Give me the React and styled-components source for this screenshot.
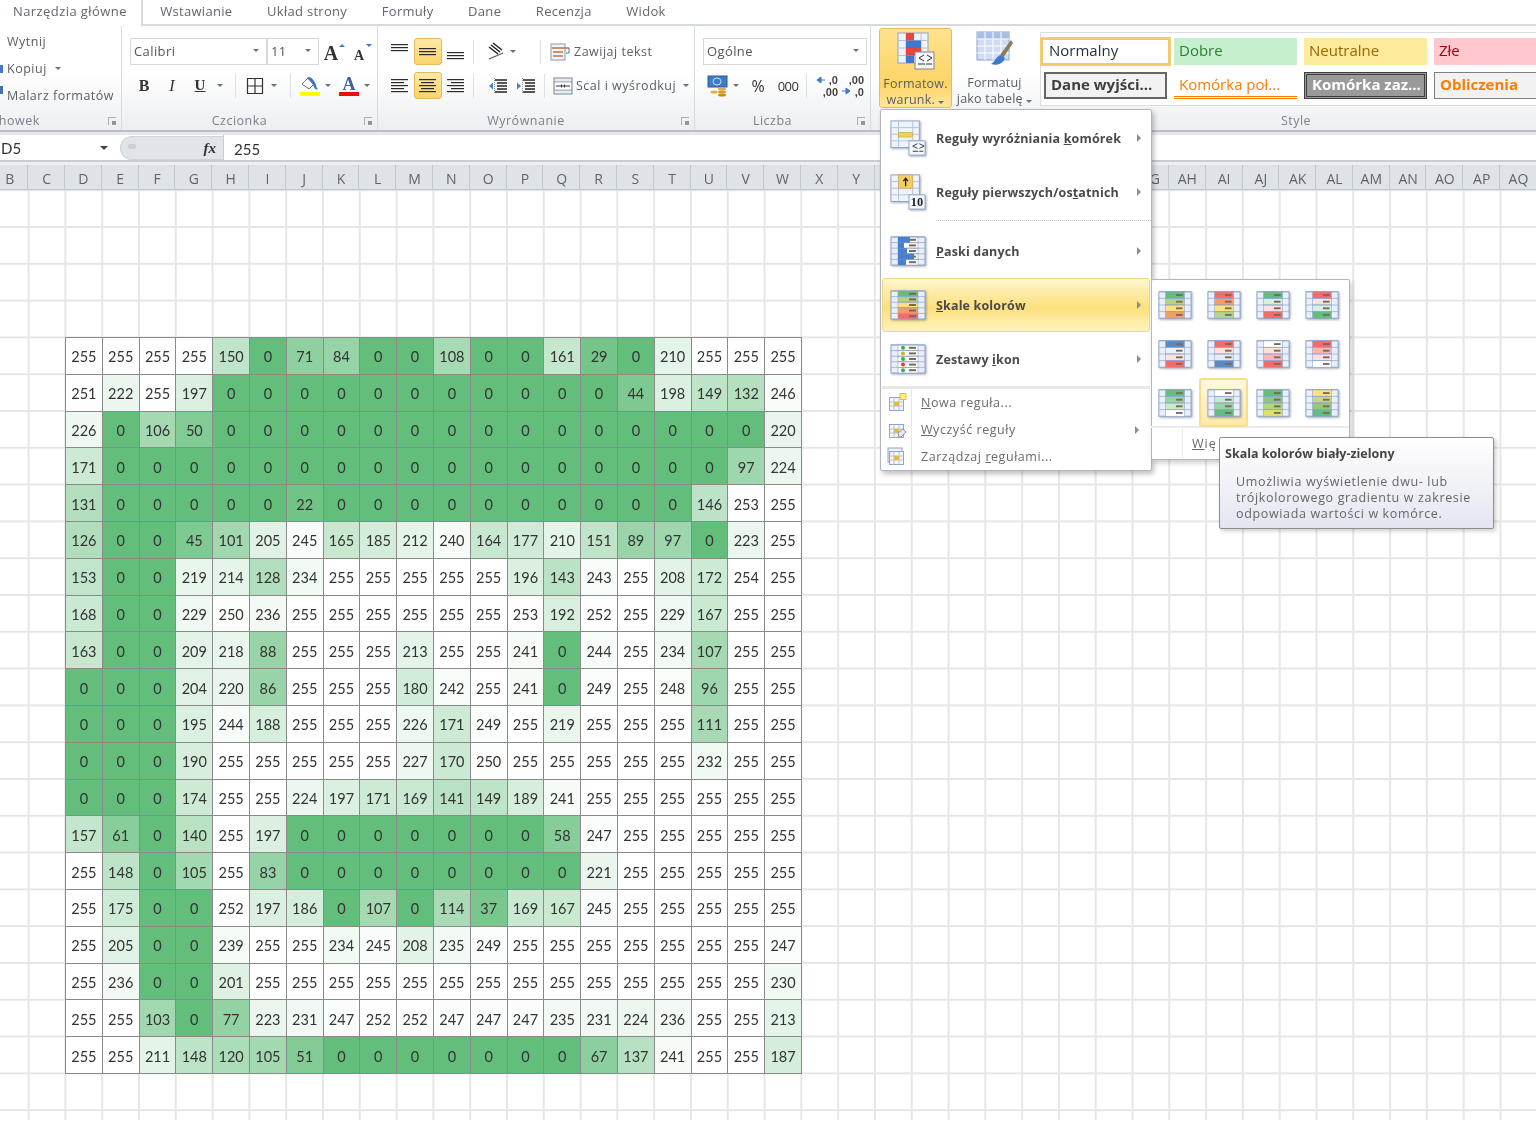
import React from 'react'
import styled, { createGlobalStyle } from 'styled-components'

const GlobalStyle = createGlobalStyle`
  html, body { margin: 0; padding: 0; background: #fff; }
  * { box-sizing: border-box; }
`

const uiFont = `"Open Sans", "Noto Sans", sans-serif`
const cellFont = `Lato, "Open Sans", sans-serif`

const rows = [
  [255,255,255,255,150,0,71,84,0,0,108,0,0,161,29,0,210,255,255,255],
  [251,222,255,197,0,0,0,0,0,0,0,0,0,0,0,44,198,149,132,246],
  [226,0,106,50,0,0,0,0,0,0,0,0,0,0,0,0,0,0,0,220],
  [171,0,0,0,0,0,0,0,0,0,0,0,0,0,0,0,0,0,97,224],
  [131,0,0,0,0,0,22,0,0,0,0,0,0,0,0,0,0,146,253,255],
  [126,0,0,45,101,205,245,165,185,212,240,164,177,210,151,89,97,0,223,255],
  [153,0,0,219,214,128,234,255,255,255,255,255,196,143,243,255,208,172,254,255],
  [168,0,0,229,250,236,255,255,255,255,255,255,253,192,252,255,229,167,255,255],
  [163,0,0,209,218,88,255,255,255,213,255,255,241,0,244,255,234,107,255,255],
  [0,0,0,204,220,86,255,255,255,180,242,255,241,0,249,255,248,96,255,255],
  [0,0,0,195,244,188,255,255,255,226,171,249,255,219,255,255,255,111,255,255],
  [0,0,0,190,255,255,255,255,255,227,170,250,255,255,255,255,255,232,255,255],
  [0,0,0,174,255,255,224,197,171,169,141,149,189,241,255,255,255,255,255,255],
  [157,61,0,140,255,197,0,0,0,0,0,0,0,58,247,255,255,255,255,255],
  [255,148,0,105,255,83,0,0,0,0,0,0,0,0,221,255,255,255,255,255],
  [255,175,0,0,252,197,186,0,107,0,114,37,169,167,245,255,255,255,255,255],
  [255,205,0,0,239,255,255,234,245,208,235,249,255,255,255,255,255,255,255,247],
  [255,236,0,0,201,255,255,255,255,255,255,255,255,255,255,255,255,255,255,230],
  [255,255,103,0,77,223,231,247,252,252,247,247,247,235,231,224,236,255,255,213],
  [255,255,211,148,120,105,51,0,0,0,0,0,0,0,67,137,241,255,255,187],
]

const columns = 'B C D E F G H I J K L M N O P Q R S T U V W X Y Z AA AB AC AD AE AF AG AH AI AJ AK AL AM AN AO AP AQ'.split(' ')
const tabs = ['Wstawianie', 'Układ strony', 'Formuły', 'Dane', 'Recenzja', 'Widok']

// white -> green scale, same as the excel rule
const shade = (v) => {
  const t = v / 255
  const mix = (a) => Math.round(a + (255 - a) * t)
  return `rgb(${mix(99)},${mix(190)},${mix(123)})`
}

const G = '#63be7b', Y = '#ffe084', R = '#f8696b', B = '#5a8ac6', W = '#ffffff', O = '#fb9a5f', L = '#b1d580'
const scales = [
  [G, L, Y, O], [R, O, Y, L], [G, '#d8f0de', '#fde0e0', R], [R, '#fde0e0', '#d8f0de', G],
  [B, '#eef3fb', '#fde0e0', R], [R, '#fde0e0', '#e3ecf8', B], [W, '#fde0e0', '#fbb5b5', R], [R, '#fbb5b5', '#fde0e0', W],
  [G, '#98d4a8', '#cbe9d3', W], [W, '#cbe9d3', '#98d4a8', G], [G, '#8cc97e', L, '#e0e070'], [Y, '#c8d87d', '#94c97f', G],
]

const Page = styled.div`
  position: relative;
  width: 1536px;
  height: 1121px;
  overflow: hidden;
  background: #fff;
  font-family: ${uiFont};
  color: #444;
  filter: blur(0.55px);
`

/* tabs */
const TabBar = styled.div`
  display: flex;
  height: 26px;
  border-bottom: 2px solid #d6dade;
  font-size: 13px;
  color: #5f6770;
`
const Tab = styled.div`
  height: ${(p) => (p.$active ? '26px' : '24px')};
  line-height: 22px;
  letter-spacing: ${(p) => (p.$active ? 0.42 : 0.3)}px;
  padding: 0 ${(p) => (p.$active ? '14px' : '17.3px')} 0 ${(p) => (p.$active ? '13px' : '17.3px')};
  ${(p) => p.$active && 'background: #fff; border-right: 2px solid #d6dade; position: relative;'}
`

/* ribbon */
const Ribbon = styled.div`
  display: flex;
  height: 104px;
  background: linear-gradient(#fff 0%, #fff 45%, #eceef1 100%);
`
const Group = styled.div`
  flex: none;
  width: ${(p) => p.$w}px;
  display: flex;
  flex-direction: column;
  margin-right: 2px;
  border-right: ${(p) => (p.$last ? 'none' : '1px solid #d8dbdf')};
`
const GroupBody = styled.div`
  flex: 1;
  display: flex;
  flex-direction: ${(p) => (p.$row ? 'row' : 'column')};
  gap: ${(p) => (p.$row ? 2 : p.$tight ? 0 : 7)}px;
  padding: ${(p) => (p.$row ? '2px 0 0 6px' : '12px 0 0 6px')};
  min-height: 0;
`
const GroupFoot = styled.div`
  height: 20px;
  position: relative;
  flex: none;
  text-align: center;
  font-size: 12.5px;
  line-height: 21px;
  color: #7a828b;
  letter-spacing: 0.5px;
  padding-right: ${(p) => (p.$center ? 0 : 22)}px;
`
const ClippedLabel = styled.span`
  display: block;
  text-align: left;
  margin-left: -15px;
`
const Launcher = styled.span`
  position: absolute;
  right: 5px;
  top: 7px;
  width: 8px;
  height: 8px;
  border-left: 1px solid #a9afb6;
  border-top: 1px solid #a9afb6;
  &::after {
    content: '';
    position: absolute;
    right: 0;
    bottom: 0;
    width: 4px;
    height: 4px;
    background: #8f969e;
  }
`
const ToolRow = styled.div`
  display: flex;
  align-items: center;
  height: 27px;
  flex: none;
`
const ClipRow = styled.div`
  position: relative;
  display: flex;
  align-items: center;
  gap: 8px;
  height: 27px;
  margin: ${(p) => (p.$first ? '-10px' : '0')} 0 0 1px;
  font-size: 12.5px;
  color: #5a6068;
  letter-spacing: 0.5px;
  flex: none;
  ${(p) =>
    p.$mark &&
    `&::before {
      content: '';
      position: absolute;
      left: -7px;
      top: ${p.$top}px;
      width: 3px;
      height: 8px;
      background: ${p.$mark};
    }`}
`
const Select = styled.div`
  width: ${(p) => p.$w}px;
  height: 27px;
  background: #fff;
  border: 1px solid #d5d9dd;
  margin-right: ${(p) => p.$gap || 0}px;
  display: flex;
  align-items: center;
  justify-content: space-between;
  padding: 0 7px 2px 3px;
  font-size: 13px;
  letter-spacing: 0.4px;
  color: #555;
  flex: none;
`
const Caret = styled.i`
  display: inline-block;
  flex: none;
  width: 0;
  height: 0;
  border-left: 3px solid transparent;
  border-right: 3px solid transparent;
  border-top: 3px solid #6c7076;
  margin: ${(p) => p.$m || '0'};
`
const Tool = styled.div`
  flex: none;
  width: ${(p) => p.$w || 28}px;
  height: 27px;
  margin-left: ${(p) => p.$left || 0}px;
  display: flex;
  align-items: center;
  justify-content: center;
  color: #333;
  font-size: ${(p) => p.$size || 15}px;
  letter-spacing: ${(p) => p.$track || 0}px;
  font-family: ${(p) => (p.$serif ? '"Liberation Serif", serif' : uiFont)};
  font-weight: ${(p) => (p.$bold ? 700 : 400)};
  font-style: ${(p) => (p.$italic ? 'italic' : 'normal')};
  ${(p) =>
    p.$on &&
    'background: linear-gradient(#ffe9a8, #fdd36a); border: 1px solid #e5b95c; border-radius: 3px;'}
`
const VLine = styled.span`
  flex: none;
  width: 1px;
  height: 24px;
  background: #dfe2e5;
  margin: 0 ${(p) => p.$m || 8}px;
`
const TextTool = styled.div`
  display: flex;
  align-items: center;
  gap: ${(p) => p.$gap || 4}px;
  margin-left: ${(p) => p.$left || 0}px;
  font-size: 12.5px;
  letter-spacing: 0.5px;
  color: #5a6068;
  white-space: nowrap;
`
const BigButton = styled.div`
  flex: none;
  width: ${(p) => p.$w}px;
  height: 80px;
  display: flex;
  flex-direction: column;
  align-items: center;
  padding-top: 3px;
  font-size: 12.5px;
  line-height: 16px;
  letter-spacing: 0.2px;
  color: #5a5f66;
  text-align: center;
  white-space: nowrap;
  border-radius: 3px;
  ${(p) =>
    p.$on &&
    'background: linear-gradient(#ffe38d, #fdd466 70%, #ffe79a); border: 1px solid #e6bb5b;'}
  svg { margin-bottom: 6px; flex: none; }
`
const Gallery = styled.div`
  flex: none;
  width: 560px;
  height: 74px;
  margin: 4px 0 0 3px;
  padding: 5px 0 0 3px;
  background: #fff;
  border: 1px solid #d9dde1;
  display: grid;
  grid-template-columns: repeat(4, 123px);
  grid-auto-rows: 27px;
  gap: 7px;
  font-family: ${uiFont};
`
const Style = styled.div`
  display: flex;
  align-items: center;
  padding: 0 5px 4px;
  font-size: 15px;
  white-space: nowrap;
  overflow: hidden;
  color: ${(p) => p.$c};
  background: ${(p) => p.$bg || 'transparent'};
  font-weight: ${(p) => (p.$bold ? 700 : 400)};
  border: ${(p) => p.$border || 'none'};
  border-bottom: ${(p) => p.$under || p.$border || 'none'};
  ${(p) => p.$under && 'padding-bottom: 1px;'}
  ${(p) => p.$wide && 'width: 129px; margin-left: -3px; padding-left: 6px; box-shadow: 0 0 0 1px #f3cf78;'}
`

/* formula bar */
const RibbonEdge = styled.div`
  height: 5px;
  border-top: 2px solid #b9bfc5;
  background: #e6e8eb;
`
const FormulaBar = styled.div`
  display: flex;
  height: 27px;
  font-family: ${cellFont};
  font-size: 15px;
  color: #333;
  background: #fff;
  border-bottom: 2px solid #c8ccd1;
`
const NameBox = styled.div`
  width: 116px;
  display: flex;
  align-items: center;
  justify-content: space-between;
  padding: 1px 8px 0 1px;
  flex: none;
  ${Caret} { border-width: 4px 4px 0; border-top-color: #444; }
`
const FxPill = styled.div`
  position: relative;
  width: 103px;
  flex: none;
  margin: 1px 0 0 4px;
  padding-right: 7px;
  background: #e1e4e8;
  border-radius: 14px 0 0 14px;
  border: 1px solid #cfd3d8;
  border-right: none;
  display: flex;
  align-items: center;
  justify-content: flex-end;
  font: italic 700 15px "Liberation Serif", serif;
  &::before {
    content: '';
    position: absolute;
    left: 7px;
    top: 7px;
    width: 8px;
    height: 5px;
    border-radius: 4px;
    background: #c9ced4;
  }
`
const FormulaInput = styled.div`
  flex: 1;
  padding: 3px 0 0 10px;
  line-height: 23px;
  border-left: 1px solid #c8ccd1;
`
const HeaderGap = styled.div`
  height: 3px;
  background: #eceef0;
`
const ColumnBar = styled.div`
  display: flex;
  height: 25px;
  margin-left: -8.6px;
  background: #dfe3e8;
  border-bottom: 1px solid #bfc4ca;
  font-family: ${uiFont};
  font-size: 14px;
  color: #5d646c;
`
const ColumnHead = styled.div`
  flex: none;
  width: 36.8px;
  display: flex;
  align-items: center;
  justify-content: center;
  padding: 2px 0 0 1px;
  border-right: 1px solid #c2c7cd;
`

/* sheet */
const Sheet = styled.div`
  height: 930px;
  padding: 147px 0 0 65px;
  background-color: #fff;
  background-image:
    linear-gradient(to right, #e6e6e6 1.5px, transparent 1.5px),
    linear-gradient(#e6e6e6 1.5px, transparent 1.5px);
  background-size: 36.8px 36.8px;
  background-position: 27.6px 0, 0 36px;
`
const DataTable = styled.div`
  display: grid;
  grid-template-columns: repeat(20, 36.8px);
  grid-auto-rows: 36.8px;
  width: 737px;
  border-top: 1px solid #8a8a8a;
  border-left: 1px solid #8a8a8a;
  font-family: ${cellFont};
  font-size: 14.5px;
  color: #333;
`
const DataCell = styled.div`
  display: flex;
  align-items: center;
  justify-content: center;
  padding-top: 2px;
  border-right: 1px solid #8a8a8a;
  border-bottom: 1px solid #8a8a8a;
`

/* overlays */
const Menu = styled.div`
  position: absolute;
  left: 880px;
  top: 109px;
  width: 272px;
  height: 362px;
  padding-top: 1px;
  background: #fff;
  border: 1px solid #b2b7bd;
  border-radius: 2px;
  box-shadow: 2px 3px 5px rgba(0, 0, 0, 0.25);
`
const MenuRow = styled.div`
  display: flex;
  align-items: center;
  height: 54px;
  margin: 0 1px;
  padding: 0 8px 0 7px;
  font-size: 12.5px;
  font-weight: 700;
  color: #4a4a4a;
  letter-spacing: 0.15px;
  white-space: nowrap;
  border: 1px solid transparent;
  border-radius: 3px;
  ${(p) =>
    p.$on &&
    'background: linear-gradient(#fff5cf, #fde07c 55%, #fff3c0); border-color: #f3d587;'}
  svg { flex: none; margin-right: 10px; }
`
const MenuLabel = styled.span`
  flex: 1;
`
const SubArrow = styled.i`
  flex: none;
  width: 0;
  height: 0;
  border-top: 4px solid transparent;
  border-bottom: 4px solid transparent;
  border-left: 4px solid #8b8b8b;
  margin-right: ${(p) => p.$right || 0}px;
`
const DottedRule = styled.div`
  height: 5px;
  margin-left: 55px;
  margin-top: 1px;
  margin-bottom: -1px;
  border-top: 1px dotted #c5c5c5;
`
const SolidRule = styled.div`
  height: 3px;
  background: #e8e8e8;
  margin: 0 1px;
`
const SmallRow = styled.div`
  display: flex;
  align-items: center;
  height: 27px;
  margin: 0 1px;
  font-size: 12.5px;
  letter-spacing: 0.55px;
  color: #6a6a6a;
`
const Gutter = styled.div`
  flex: none;
  width: 30px;
  height: 100%;
  display: flex;
  align-items: center;
  justify-content: center;
  border-right: 1px solid #e6e6e6;
  margin-right: 9px;
`
const SubMenu = styled.div`
  position: absolute;
  left: 1151px;
  top: 279px;
  width: 199px;
  height: 181px;
  background: #fff;
  border: 1px solid #b2b7bd;
  border-radius: 2px;
  box-shadow: 2px 3px 5px rgba(0, 0, 0, 0.2);
`
const ScaleGrid = styled.div`
  display: grid;
  grid-template-columns: repeat(4, 49px);
  grid-auto-rows: 49px;
  height: 148px;
  margin-left: -2px;
  border-bottom: 2px solid #ececec;
`
const ScaleCell = styled.div`
  display: flex;
  align-items: center;
  justify-content: center;
  border: 1px solid transparent;
  border-radius: 3px;
  ${(p) =>
    p.$on &&
    'background: linear-gradient(#fff8dc, #ffe9a6); border: 2px solid #f7dd92;'}
`
const SubFoot = styled.div`
  display: flex;
  align-items: center;
  height: 30px;
  font-size: 12.5px;
  letter-spacing: 1px;
  color: #666;
`
const SubGutter = styled.div`
  width: 31px;
  height: 100%;
  border-right: 1px solid #ececec;
  margin-right: 9px;
`
const Tooltip = styled.div`
  position: absolute;
  left: 1219px;
  top: 437px;
  width: 275px;
  height: 92px;
  padding: 8px 5px;
  background: linear-gradient(#fff, #e4e5f0);
  border: 1px solid #8b8f94;
  border-radius: 2px;
  box-shadow: 2px 2px 4px rgba(0, 0, 0, 0.2);
  color: #666;
  font-size: 12.5px;
  line-height: 16px;
  letter-spacing: 0.65px;
  white-space: nowrap;
`
const TipTitle = styled.div`
  font-weight: 700;
  color: #444;
  letter-spacing: 0;
  margin-bottom: 12px;
`
const TipBody = styled.div`
  padding-left: 11px;
`
const Shadowed = styled.svg`
  display: block;
  filter: drop-shadow(1px 1px 1px rgba(60, 70, 90, 0.45));
`

/* drawings */
function MiniSheet({ cells, size = 34, height = 30, children }) {
  const rowH = 28 / cells.length
  return (
    <Shadowed width={size} height={height} viewBox="0 0 36 30">
      <rect x="1" y="1" width="34" height="28" fill="#e9effb" stroke="#8ea4c8" />
      {cells.map((c, i) => (
        <g key={i}>
          <rect x="8" y={1 + i * rowH} width="20" height={rowH} fill={c} stroke="#8ea4c8" strokeWidth=".6" />
          <line x1="1" x2="35" y1={1 + i * rowH} y2={1 + i * rowH} stroke="#8ea4c8" strokeWidth=".7" />
          <rect x="19" y={1 + i * rowH + rowH / 2 - 1} width="7" height="2" fill="#7c6a58" />
        </g>
      ))}
      {children}
    </Shadowed>
  )
}

function RuleIcon({ top }) {
  return (
    <Shadowed width="36" height="36" viewBox="0 0 38 38">
      <rect x="1" y="1" width="30" height="28" fill="#eef3fc" stroke="#8ea4c8" />
      <path d="M1 8h30M1 15h30M1 22h30M9 1v28M24 1v28" stroke="#b3c3dc" fill="none" />
      {top ? (
        <>
          <rect x="9" y="1" width="15" height="14" fill="#f2cf62" stroke="#b89a3a" strokeWidth=".5" />
          <path d="M16.5 13V5M14 7.5l2.5-3 2.5 3" stroke="#222" strokeWidth="1.4" fill="none" />
        </>
      ) : (
        <rect x="9" y="13" width="15" height="5" fill="#f2cf62" stroke="#b89a3a" strokeWidth=".5" />
      )}
      <rect x="20" y="22" width="17" height="15" fill="#f5f7fb" stroke="#8ea4c8" />
      {top ? (
        <text x="28.5" y="34" textAnchor="middle" fontFamily="Liberation Serif" fontWeight="700" fontSize="13" fill="#222">10</text>
      ) : (
        <path d="M29 25l-5 2.500 5 2.500M24 33h6M31 25l5 2.500-5 2.500M31 33h4" stroke="#333" strokeWidth="1" fill="none" />
      )}
    </Shadowed>
  )
}

function BarsIcon() {
  const widths = [12, 6, 9, 16, 8]
  return (
    <MiniSheet cells={['#fff', '#fff', '#fff', '#fff', '#fff']} size={36} height={34}>
      {widths.map((w, i) => (
        <rect key={i} x="8" y={1 + i * 5.6} width={w} height="5.6" fill="#4a7fd0" />
      ))}
    </MiniSheet>
  )
}

function IconSetIcon() {
  const dots = ['#35b04a', '#b8c020', '#35b04a', '#e8392c', '#35b04a']
  return (
    <MiniSheet cells={['#fff', '#fff', '#fff', '#fff', '#fff']} size={36} height={34}>
      {dots.map((c, i) => (
        <circle key={i} cx="13" cy={3.8 + i * 5.6} r="2" fill={c} />
      ))}
    </MiniSheet>
  )
}

function SmallSheet({ kind }) {
  return (
    <svg width="20" height="20" viewBox="0 0 20 20">
      {kind === 'stack' && <rect x="1" y="1" width="14" height="14" fill="#eef3fc" stroke="#8ea4c8" />}
      <rect x="2.5" y="4.5" width="14" height="13" fill="#f2f6fd" stroke="#8ea4c8" />
      <path d="M2.5 9h14M2.5 13h14M7 4.500v13M12 4.500v13" stroke="#b3c3dc" fill="none" />
      <rect x="7" y="9" width="5" height="4" fill="#e8b93f" />
      {kind === 'new' && <rect x="13" y="0.500" width="6" height="6" fill="#ffe98a" stroke="#e5c33d" />}
      {kind === 'clear' && <path d="M11 13l5-4 3 3-5 5h-2z" fill="#e3e6f0" stroke="#8c93a8" />}
    </svg>
  )
}

function Lines({ spec }) {
  return (
    <svg width="20" height="20" viewBox="0 0 20 20">
      {spec.map(([x, y, w], i) => (
        <rect key={i} x={x} y={y} width={w} height="1.2" fill="#2b2b2b" />
      ))}
    </svg>
  )
}
const alignTop = [[1, 2, 17], [1, 5, 17], [1, 8, 17]]
const alignMid = [[1, 6, 17], [1, 9, 17], [1, 12, 17]]
const alignBot = [[1, 10, 17], [1, 13, 17], [1, 16, 17]]
const alignLeft = [[1, 3, 17], [1, 6, 13], [1, 9, 17], [1, 12, 13], [1, 15, 17]]
const alignCenter = [[1, 3, 17], [3, 6, 13], [1, 9, 17], [3, 12, 13], [1, 15, 17]]
const alignRight = [[1, 3, 17], [5, 6, 13], [1, 9, 17], [5, 12, 13], [1, 15, 17]]

function IndentIcon({ inward }) {
  return (
    <svg width="20" height="20" viewBox="0 0 20 20">
      <path d="M7 4h12M9 7h10M9 10h10M9 13h10M7 16h12" stroke="#222" strokeWidth="1.300" fill="none" />
      <path d={inward ? 'M1 6.500L5 10l-4 3.500z' : 'M5 6.500L1 10l4 3.500z'} fill="#3f86d6" />
      <path d="M6.500 2v16" stroke="#999" strokeDasharray="1 1" fill="none" />
    </svg>
  )
}

function ConditionalIcon() {
  return (
    <svg width="38" height="38" viewBox="0 0 38 38">
      <rect x="1" y="1" width="30" height="30" fill="#eef3fc" stroke="#8ea4c8" />
      <path d="M1 8.500h30M1 16h30M1 23.500h30M9 1v30M24 1v30" stroke="#b3c3dc" fill="none" />
      <rect x="9" y="1" width="8" height="7.500" fill="#e8453a" />
      <rect x="9" y="8.500" width="15" height="7.500" fill="#3f78cc" />
      <rect x="9" y="16" width="15" height="7.500" fill="#e8453a" />
      <rect x="9" y="23.500" width="8" height="7.500" fill="#3f78cc" />
      <rect x="18" y="20" width="19" height="17" fill="#f5f7fb" stroke="#7d8794" />
      <path d="M27 23l-5 3 5 3M21 32h7M30 23l5 3-5 3M29 32h6" stroke="#333" fill="none" />
    </svg>
  )
}

function TableStyleIcon() {
  return (
    <svg width="38" height="38" viewBox="0 0 38 38">
      <rect x="1" y="1" width="32" height="28" fill="#cfdcf3" stroke="#8ea4c8" />
      <rect x="1" y="1" width="32" height="7" fill="#a9c0e6" />
      <path d="M1 8h32M1 15h32M1 22h32M9 1v28M17 1v28M25 1v28" stroke="#fff" fill="none" />
      <path d="M35 9L24 24l3 3L37 12z" fill="#8c7a5c" />
      <path d="M24 24c-4 2-5 7-9 9 6 2 12 0 14-6z" fill="#3f78cc" />
    </svg>
  )
}

function BordersIcon() {
  return (
    <svg width="18" height="18" viewBox="0 0 18 18">
      <path d="M1.500 1.500h15v15h-15zM9 1.500v15M1.500 9h15" fill="none" stroke="#333" strokeWidth="1.200" />
    </svg>
  )
}

function BucketIcon() {
  return (
    <svg width="22" height="22" viewBox="0 0 22 22">
      <path d="M3 9l6-6 6 6-5 5z" fill="#fff" stroke="#6b7380" />
      <path d="M8 3c2-3 7 1 9 7 .5 2 .5 3 2 4-2 1-3 0-4-2-1-3-3-5-7-9z" fill="#3b76c4" />
      <rect x="1" y="17" width="20" height="4" fill="#ffff00" />
    </svg>
  )
}

function FontColorLetter() {
  return (
    <svg width="22" height="22" viewBox="0 0 22 22">
      <text x="11" y="15" textAnchor="middle" fontFamily="Liberation Serif" fontWeight="700" fontSize="18" fill="#3b5f9c">A</text>
      <rect x="1" y="17" width="20" height="4" fill="#e81010" />
    </svg>
  )
}

function GrowLetter({ up }) {
  return (
    <svg width="24" height="24" viewBox="0 0 24 24">
      <text x={up ? 9 : 10} y="20" textAnchor="middle" fontFamily="Liberation Serif" fontWeight="700" fontSize={up ? 20 : 14} fill="#333">A</text>
      <path d={up ? 'M17 7l3-3 3 3z' : 'M17 4h6l-3 3z'} fill="#3f78cc" />
    </svg>
  )
}

function OrientIcon() {
  return (
    <svg width="24" height="20" viewBox="0 0 24 20">
      <path d="M3 5l9 7M5 3l9 7M7 1l9 7" stroke="#222" strokeWidth="1.500" fill="none" />
      <path d="M3 17l14-6" stroke="#555" strokeWidth="1.200" fill="none" />
    </svg>
  )
}

function WrapIcon() {
  return (
    <svg width="20" height="20" viewBox="0 0 20 20">
      <rect x="1" y="2" width="14" height="16" fill="#f2f5fa" stroke="#8d96a3" />
      <path d="M2 6h17M3 10h10M3 14h10" stroke="#c2713a" strokeWidth="1.300" fill="none" />
      <path d="M19 6v5h-3" stroke="#3f78cc" fill="none" />
    </svg>
  )
}

function MergeIcon() {
  return (
    <svg width="20" height="20" viewBox="0 0 20 20">
      <rect x="1" y="2" width="18" height="16" fill="#e6edf8" stroke="#7d8794" />
      <path d="M1 6h18M1 14h18" stroke="#7d8794" fill="none" />
      <rect x="2" y="6.500" width="16" height="7" fill="#fff" />
      <path d="M3 10h5M17 10h-5" stroke="#333" fill="none" />
      <path d="M8 8l2 2-2 2zM12 8l-2 2 2 2z" fill="#333" />
    </svg>
  )
}

function CurrencyIcon() {
  return (
    <svg width="24" height="22" viewBox="0 0 22 22">
      <rect x="1" y="1" width="19" height="11" fill="#3e7cc7" stroke="#2d5a94" />
      <ellipse cx="10" cy="6.500" rx="4" ry="3.500" fill="none" stroke="#cfe0f5" />
      <ellipse cx="15" cy="14" rx="4" ry="1.500" fill="#e3ac3b" />
      <ellipse cx="15" cy="17" rx="4" ry="1.500" fill="#d69a2a" />
      <ellipse cx="15" cy="20" rx="4" ry="1.500" fill="#c68a20" />
      <ellipse cx="7" cy="17" rx="3.500" ry="1.500" fill="#e3ac3b" />
    </svg>
  )
}

function DecimalIcon({ more }) {
  return (
    <svg width="24" height="24" viewBox="0 0 24 24">
      <text x="23" y="10" textAnchor="end" fontFamily="Liberation Sans" fontWeight="700" fontSize="11" fill="#444">{more ? ',00' : ',0'}</text>
      <text x="23" y="22" textAnchor="end" fontFamily="Liberation Sans" fontWeight="700" fontSize="11" fill="#444">{more ? ',0' : ',00'}</text>
      <path d={more ? 'M1 17h6M5 14l4 3-4 3z' : 'M4 6h6M6 3L2 6l4 3z'} stroke="#3f78cc" fill="#3f78cc" />
    </svg>
  )
}

export default function App() {
  return (
    <Page>
      <GlobalStyle />
      <TabBar>
        <Tab $active>Narzędzia główne</Tab>
        {tabs.map((t) => (
          <Tab key={t}>{t}</Tab>
        ))}
      </TabBar>

      <Ribbon>
        <Group $w={122}>
          <GroupBody $tight>
            <ClipRow $first>Wytnij</ClipRow>
            <ClipRow $mark="#3f78cc" $top={10}>Kopiuj <Caret /></ClipRow>
            <ClipRow $mark="#4a6fb0" $top={4}>Malarz formatów</ClipRow>
          </GroupBody>
          <GroupFoot $center><ClippedLabel>Schowek</ClippedLabel><Launcher /></GroupFoot>
        </Group>

        <Group $w={254}>
          <GroupBody>
            <ToolRow>
              <Select $w={137}>Calibri <Caret /></Select>
              <Select $w={52}>11 <Caret /></Select>
              <Tool $w={30}><GrowLetter up /></Tool>
              <Tool $w={24}><GrowLetter /></Tool>
            </ToolRow>
            <ToolRow>
              <Tool $w={28} $bold $serif $size={16}>B</Tool>
              <Tool $w={28} $italic $serif $size={16}>I</Tool>
              <Tool $w={28} $bold $serif $size={15}><u>U</u></Tool>
              <Caret $m="0 9px 0 3px" />
              <VLine $m={3} />
              <Tool $w={32}><BordersIcon /></Tool>
              <Caret $m="0 9px 0 0" />
              <VLine $m={4} />
              <Tool $w={30}><BucketIcon /></Tool>
              <Caret $m="0 6px 0 0" />
              <Tool $w={24}><FontColorLetter /></Tool>
              <Caret $m="0 0 0 3px" />
            </ToolRow>
          </GroupBody>
          <GroupFoot>Czcionka<Launcher /></GroupFoot>
        </Group>

        <Group $w={315}>
          <GroupBody>
            <ToolRow>
              <Tool><Lines spec={alignTop} /></Tool>
              <Tool $on><Lines spec={alignMid} /></Tool>
              <Tool><Lines spec={alignBot} /></Tool>
              <VLine $m={3} />
              <Tool $w={28} $left={7}><OrientIcon /></Tool>
              <Caret $m="0 0 0 -2px" />
              <VLine $m={24} />
              <TextTool $left={-15}><WrapIcon />Zawijaj tekst</TextTool>
            </ToolRow>
            <ToolRow>
              <Tool><Lines spec={alignLeft} /></Tool>
              <Tool $on><Lines spec={alignCenter} /></Tool>
              <Tool><Lines spec={alignRight} /></Tool>
              <VLine $m={3} />
              <Tool $w={28} $left={7}><IndentIcon /></Tool>
              <Tool $w={28}><IndentIcon inward /></Tool>
              <VLine $m={4} />
              <TextTool $left={4} $gap={3}><MergeIcon />Scal i wyśrodkuj <Caret $m="0 0 0 4px" /></TextTool>
            </ToolRow>
          </GroupBody>
          <GroupFoot>Wyrównanie<Launcher /></GroupFoot>
        </Group>

        <Group $w={174}>
          <GroupBody>
            <ToolRow>
              <Select $w={164}>Ogólne <Caret /></Select>
            </ToolRow>
            <ToolRow>
              <Tool $w={30}><CurrencyIcon /></Tool>
              <Caret />
              <Tool $w={38} $size={16}>%</Tool>
              <Tool $w={22} $size={13} $track={-0.6}>000</Tool>
              <VLine $m={7} />
              <Tool $w={26}><DecimalIcon /></Tool>
              <Tool $w={26}><DecimalIcon more /></Tool>
            </ToolRow>
          </GroupBody>
          <GroupFoot>Liczba<Launcher /></GroupFoot>
        </Group>

        <Group $w={846} $last>
          <GroupBody $row>
            <BigButton $w={73} $on>
              <ConditionalIcon />
              Formatow.<span>warunk. <Caret /></span>
            </BigButton>
            <BigButton $w={81}>
              <TableStyleIcon />
              Formatuj<span>jako tabelę <Caret /></span>
            </BigButton>
            <Gallery>
              <Style $c="#1f2d3d" $wide $border="2px solid #f1c96b">Normalny</Style>
              <Style $c="#2f7d32" $bg="#c6efce">Dobre</Style>
              <Style $c="#9c6500" $bg="#ffeb9c">Neutralne</Style>
              <Style $c="#9c0006" $bg="#ffc7ce">Złe</Style>
              <Style $c="#3f3f3f" $bg="#f2f2f2" $bold $border="2px solid #666">Dane wyjści...</Style>
              <Style $c="#fa7d00" $under="3px double #fa7d00">Komórka poł...</Style>
              <Style $c="#fff" $bg="#9a9a9a" $bold $border="3px double #3f3f3f">Komórka zaz...</Style>
              <Style $c="#fa7d00" $bg="#f2f2f2" $bold $border="1px solid #7f7f7f">Obliczenia</Style>
            </Gallery>
          </GroupBody>
          <GroupFoot $center>Style</GroupFoot>
        </Group>
      </Ribbon>
      <RibbonEdge />

      <FormulaBar>
        <NameBox>D5 <Caret /></NameBox>
        <FxPill>fx</FxPill>
        <FormulaInput>255</FormulaInput>
      </FormulaBar>
      <HeaderGap />
      <ColumnBar>
        {columns.map((c) => (
          <ColumnHead key={c}>{c}</ColumnHead>
        ))}
      </ColumnBar>

      <Sheet>
        <DataTable>
          {rows.flat().map((v, i) => (
            <DataCell key={i} style={{ background: shade(v) }}>{v}</DataCell>
          ))}
        </DataTable>
      </Sheet>

      <Menu>
        <MenuRow>
          <RuleIcon />
          <MenuLabel>Reguły wyróżniania <u>k</u>omórek</MenuLabel>
          <SubArrow />
        </MenuRow>
        <MenuRow>
          <RuleIcon top />
          <MenuLabel>Reguły pierwszych/os<u>t</u>atnich</MenuLabel>
          <SubArrow />
        </MenuRow>
        <DottedRule />
        <MenuRow>
          <BarsIcon />
          <MenuLabel><u>P</u>aski danych</MenuLabel>
          <SubArrow />
        </MenuRow>
        <MenuRow $on>
          <MiniSheet size={36} height={34} cells={[G, L, Y, O, R]} />
          <MenuLabel><u>S</u>kale kolorów</MenuLabel>
          <SubArrow />
        </MenuRow>
        <MenuRow>
          <IconSetIcon />
          <MenuLabel>Zestawy <u>i</u>kon</MenuLabel>
          <SubArrow />
        </MenuRow>
        <SolidRule />
        <SmallRow>
          <Gutter><SmallSheet kind="new" /></Gutter>
          <MenuLabel><u>N</u>owa reguła...</MenuLabel>
        </SmallRow>
        <SmallRow>
          <Gutter><SmallSheet kind="clear" /></Gutter>
          <MenuLabel><u>W</u>yczyść reguły</MenuLabel>
          <SubArrow $right={11} />
        </SmallRow>
        <SmallRow>
          <Gutter><SmallSheet kind="stack" /></Gutter>
          <MenuLabel>Zarządzaj <u>r</u>egułami...</MenuLabel>
        </SmallRow>
      </Menu>

      <SubMenu>
        <ScaleGrid>
          {scales.map((s, i) => (
            <ScaleCell key={i} $on={i === 9}>
              <MiniSheet cells={s} />
            </ScaleCell>
          ))}
        </ScaleGrid>
        <SubFoot>
          <SubGutter />
          <span><u>W</u>ię</span>
        </SubFoot>
      </SubMenu>

      <Tooltip>
        <TipTitle>Skala kolorów biały-zielony</TipTitle>
        <TipBody>
          Umożliwia wyświetlenie dwu- lub<br />
          trójkolorowego gradientu w zakresie<br />
          odpowiada wartości w komórce.
        </TipBody>
      </Tooltip>
    </Page>
  )
}
